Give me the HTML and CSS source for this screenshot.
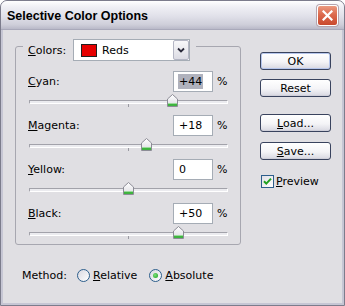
FILE: index.html
```html
<!DOCTYPE html>
<html>
<head>
<meta charset="utf-8">
<link rel="stylesheet" href="styles.css">
</head>
<body>
<div class="window">
  <div class="titlebar">
    <span class="title">Selective Color Options</span>
    <div class="close">
      <svg width="11" height="11" viewBox="0 0 11 11"><path d="M1.5 1.5 L9.5 9.5 M9.5 1.5 L1.5 9.5" stroke="#fff" stroke-width="2.2" stroke-linecap="square"/></svg>
    </div>
  </div>
  <div class="client">
    <div class="main">
      <div class="group">
        <div class="colors-row">
          <span class="clabel"><u>C</u>olors:</span>
          <div class="select">
            <span class="swatch"></span>
            <span class="sel-text">Reds</span>
            <span class="sel-btn"><svg width="8" height="6" viewBox="0 0 8 6"><path d="M1 1.5 L4 4.5 L7 1.5" fill="none" stroke="#2b2b3b" stroke-width="1.8"/></svg></span>
          </div>
        </div>
        <div class="fields">
          <div class="field">
            <div class="field-row"><span class="flabel"><u>C</u>yan:</span><span class="input"><span class="hl">+44</span></span><span class="pct">%</span></div>
            <div class="slider"><div class="track"></div><div class="tick"></div>
              <svg class="thumb" style="left:139px" width="11" height="13" viewBox="0 0 11 13"><defs><linearGradient id="tg1" x1="0" y1="0" x2="0" y2="1"><stop offset="0" stop-color="#fff"/><stop offset="1" stop-color="#dcdce2"/></linearGradient></defs><path d="M0.5 5 L5.5 0.5 L10.5 5 L10.5 12.5 L0.5 12.5 Z" fill="url(#tg1)" stroke="#8c8c96"/><rect x="1" y="9.5" width="9" height="2.5" fill="#3fb43f"/><rect x="1" y="9" width="9" height="1" fill="#9ada9a"/></svg>
            </div>
          </div>
          <div class="field">
            <div class="field-row"><span class="flabel"><u>M</u>agenta:</span><span class="input">+18</span><span class="pct">%</span></div>
            <div class="slider"><div class="track"></div><div class="tick"></div>
              <svg class="thumb" style="left:113px" width="11" height="13" viewBox="0 0 11 13"><defs><linearGradient id="tg2" x1="0" y1="0" x2="0" y2="1"><stop offset="0" stop-color="#fff"/><stop offset="1" stop-color="#dcdce2"/></linearGradient></defs><path d="M0.5 5 L5.5 0.5 L10.5 5 L10.5 12.5 L0.5 12.5 Z" fill="url(#tg2)" stroke="#8c8c96"/><rect x="1" y="9.5" width="9" height="2.5" fill="#3fb43f"/><rect x="1" y="9" width="9" height="1" fill="#9ada9a"/></svg>
            </div>
          </div>
          <div class="field">
            <div class="field-row"><span class="flabel"><u>Y</u>ellow:</span><span class="input">0</span><span class="pct">%</span></div>
            <div class="slider"><div class="track"></div><div class="tick"></div>
              <svg class="thumb" style="left:95px" width="11" height="13" viewBox="0 0 11 13"><defs><linearGradient id="tg3" x1="0" y1="0" x2="0" y2="1"><stop offset="0" stop-color="#fff"/><stop offset="1" stop-color="#dcdce2"/></linearGradient></defs><path d="M0.5 5 L5.5 0.5 L10.5 5 L10.5 12.5 L0.5 12.5 Z" fill="url(#tg3)" stroke="#8c8c96"/><rect x="1" y="9.5" width="9" height="2.5" fill="#3fb43f"/><rect x="1" y="9" width="9" height="1" fill="#9ada9a"/></svg>
            </div>
          </div>
          <div class="field">
            <div class="field-row"><span class="flabel"><u>B</u>lack:</span><span class="input">+50</span><span class="pct">%</span></div>
            <div class="slider"><div class="track"></div><div class="tick"></div>
              <svg class="thumb" style="left:145px" width="11" height="13" viewBox="0 0 11 13"><defs><linearGradient id="tg4" x1="0" y1="0" x2="0" y2="1"><stop offset="0" stop-color="#fff"/><stop offset="1" stop-color="#dcdce2"/></linearGradient></defs><path d="M0.5 5 L5.5 0.5 L10.5 5 L10.5 12.5 L0.5 12.5 Z" fill="url(#tg4)" stroke="#8c8c96"/><rect x="1" y="9.5" width="9" height="2.5" fill="#3fb43f"/><rect x="1" y="9" width="9" height="1" fill="#9ada9a"/></svg>
            </div>
          </div>
        </div>
      </div>
      <div class="method">
        <span class="mlabel">Method:</span>
        <span class="opt"><span class="radio"></span><span><u>R</u>elative</span></span>
        <span class="opt"><span class="radio on"></span><span><u>A</u>bsolute</span></span>
      </div>
    </div>
    <div class="buttons">
      <div class="btn default">OK</div>
      <div class="btn reset">Reset</div>
      <div class="btn load"><span><u>L</u>oad...</span></div>
      <div class="btn save"><span><u>S</u>ave...</span></div>
      <div class="preview">
        <span class="check"><svg width="11" height="11" viewBox="0 0 11 11"><path d="M2 5.2 L4.3 7.6 L9 2.6" fill="none" stroke="#21a121" stroke-width="2"/></svg></span>
        <span><u>P</u>review</span>
      </div>
    </div>
  </div>
</div>
</body>
</html>
```
FILE: styles.css
```css
* { box-sizing: border-box; }
body { margin: 0; background: #ffffff; }
.window {
  width: 345px; height: 306px;
  display: flex; flex-direction: column;
  border: 1px solid #7c7c8c;
  border-radius: 7px 7px 0 0;
  overflow: hidden;
  font-family: "DejaVu Sans", sans-serif;
  font-size: 11px;
  color: #000;
  background: #c4c4d2;
}
.titlebar {
  height: 29px; flex: none;
  display: flex; align-items: flex-start;
  background: linear-gradient(to bottom, #ffffff 0%, #f0f0f5 20%, #e0e0e9 55%, #ceced9 85%, #b9b9c8 100%);
  border-bottom: 1px solid #a9a9ba;
}
.title {
  flex: 1;
  font-family: "Liberation Sans", sans-serif;
  font-weight: bold;
  font-size: 12.5px;
  line-height: 14px;
  margin: 8px 0 0 6px;
  color: #000;
}
.close {
  width: 21px; height: 21px;
  margin: 4px 6px 0 0;
  border: 1px solid #ffffff;
  border-radius: 3px;
  background: linear-gradient(to bottom, #eb9a80 0%, #dc6a4e 45%, #c9492e 100%);
  box-shadow: 0 0 0 1px #b4a4ae;
  display: flex; align-items: center; justify-content: center;
}
.client {
  flex: 1;
  display: flex;
  background: #e0dfe3;
  border: 2px solid #c6c6d4;
  border-top: 0;
}
.main {
  width: 238px; flex: none;
  display: flex; flex-direction: column;
  padding-left: 12px;
}
.group {
  margin-top: 16px;
  height: 199px;
  border: 1px solid #a7a7b0;
  border-radius: 3px;
  padding: 0 12px;
  display: flex; flex-direction: column;
}
.colors-row {
  align-self: flex-start;
  display: flex; align-items: center;
  height: 22px;
  margin: -8px 0 0 -5px;
  padding: 0 6px 0 5px;
  background: #e0dfe3;
}
.clabel { width: 45px; }
.select {
  width: 117px; height: 22px;
  display: flex; align-items: center;
  background: #ffffff;
  border: 1px solid #a5acb5;
}
.swatch {
  width: 16px; height: 13px;
  margin-left: 7px;
  background: #e60000;
  border: 1px solid #202020;
}
.sel-text { flex: 1; margin-left: 5px; }
.sel-btn {
  width: 16px; height: 20px;
  display: flex; align-items: center; justify-content: center;
  background: linear-gradient(to bottom, #f8f8fa, #dcdce4);
  border: 1px solid #b4b6c4;
  border-radius: 2px;
}
.fields { padding-top: 10px; display: flex; flex-direction: column; }
.field { display: flex; flex-direction: column; }
.field-row { display: flex; align-items: center; height: 21px; }
.flabel { flex: 1; }
.input {
  width: 40px; height: 21px;
  border: 1px solid #a5acb5;
  background: #ffffff;
  padding-left: 5px;
  display: flex; align-items: center;
}
.hl { background: #b0b2bd; padding: 1px 1px; margin-left: -1px; }
.pct { width: 15px; padding-left: 4px; }
.slider { position: relative; height: 23px; display: flex; flex-direction: column; }
.track {
  margin: 8px 0 0 1px;
  height: 4px;
  border-top: 1px solid #a2a2aa;
  border-left: 1px solid #a2a2aa;
  border-bottom: 1px solid #ffffff;
  border-right: 1px solid #ffffff;
  background: #ebebef;
}
.tick { margin-left: 100px; width: 1px; height: 3px; background: #9a9aa2; }
.thumb { position: absolute; top: 2px; }
.method {
  display: flex; align-items: center;
  height: 15px;
  margin: 23px 0 0 7px;
}
.mlabel { margin-right: 10px; }
.opt { display: flex; align-items: center; }
.opt + .opt { margin-left: 12px; }
.radio {
  width: 13px; height: 13px;
  border-radius: 50%;
  border: 1px solid #2c5e8c;
  background: linear-gradient(135deg, #d8d8e0, #ffffff);
  margin-right: 3px;
  display: flex; align-items: center; justify-content: center;
}
.radio.on::after {
  content: "";
  width: 5px; height: 5px;
  border-radius: 50%;
  background: radial-gradient(circle at 40% 40%, #7ee07e, #18a018);
}
.buttons {
  width: 71px; flex: none;
  display: flex; flex-direction: column;
  margin: 22px 0 0 19px;
}
.btn {
  height: 18px;
  border: 1px solid #39435e;
  border-radius: 3px;
  background: linear-gradient(to bottom, #ffffff 0%, #f4f4f7 55%, #dedee6 90%, #c9c9d4 100%);
  display: flex; align-items: center; justify-content: center;
}
.btn.default { box-shadow: inset 0 0 0 1px #b6c6ec; }
.btn.reset { margin-top: 9px; }
.btn.load { margin-top: 17px; }
.btn.save { margin-top: 10px; }
.preview {
  display: flex; align-items: center;
  height: 13px;
  margin: 15px 0 0 1px;
}
.check {
  width: 13px; height: 13px;
  border: 1px solid #2c5e8c;
  background: linear-gradient(135deg, #e0e0e6, #ffffff);
  margin-right: 2px;
  display: flex; align-items: center; justify-content: center;
}
```
